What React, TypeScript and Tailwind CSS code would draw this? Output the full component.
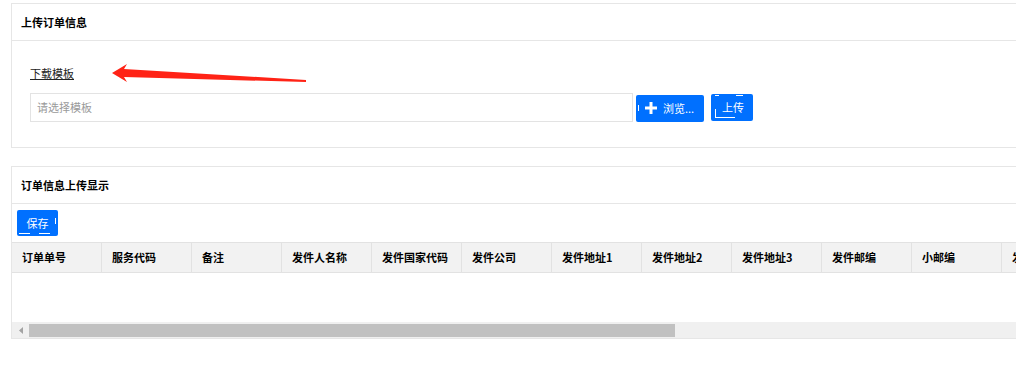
import React from 'react';

const columns = [
  '订单单号',
  '服务代码',
  '备注',
  '发件人名称',
  '发件国家代码',
  '发件公司',
  '发件地址1',
  '发件地址2',
  '发件地址3',
  '发件邮编',
  '小邮编',
  '发件城市',
  '发件省份',
];

const font = "font-['Microsoft_YaHei','Noto_Sans_CJK_SC',sans-serif]";

const App: React.FC = () => {
  return (
    <div className={`w-[1016px] h-[374px] overflow-hidden bg-white text-[11px] text-[#333] ${font}`}>
      {/* Upload panel */}
      <div className="relative mt-[3px] ml-[11px] w-[1030px] border border-[#e6e6e6] bg-white">
        <div className="h-[37px] flex items-center px-[9px] border-b border-[#e6e6e6] text-black font-semibold">
          上传订单信息
        </div>
        <div className="pt-[24px] pb-[25px] pl-[18px]">
          <a className="block h-[16px] leading-[16px] w-fit underline text-[#222]" href="#">
            下载模板
          </a>
          <div className="mt-[12px] flex items-center">
            <div className="w-[603px] h-[29px] border border-[#e3e3e3] flex items-center pl-[6px] text-[#9a9a9a]">
              请选择模板
            </div>
            <button className="relative ml-[3px] mt-[1px] w-[68px] h-[27px] rounded-[2px] bg-[#0070ff] text-white flex items-center pl-[9px] gap-[6px]">
              <span className="absolute left-[2px] top-[10px] w-px h-[6px] bg-white" />
              <svg width="12" height="12" viewBox="0 0 12 12">
                <path d="M4.5 0h3v4.5H12v3H7.5V12h-3V7.5H0v-3h4.5z" fill="white" />
              </svg>
              <span>浏览...</span>
            </button>
            <button className="relative ml-[7px] w-[42px] h-[27px] rounded-[2px] bg-[#0070ff] text-white flex items-center justify-center pl-[2px]">
              <span className="absolute left-[4px] top-[1px] w-[4px] h-px bg-white" />
              <span className="absolute left-[25px] top-[1px] w-[7px] h-px bg-white" />
              <span className="absolute left-[4px] top-[15px] w-px h-[9px] bg-white" />
              <span className="absolute left-[4px] top-[23px] w-[20px] h-px bg-white" />
              上传
            </button>
          </div>
        </div>
        {/* red arrow annotation */}
        <svg className="absolute left-[-11px] top-[-3px] pointer-events-none" width="320" height="100" viewBox="0 0 320 100">
          <polygon
            points="111,72 126,63 123,68 305,79 305,81 123,76 126,81"
            fill="#ff2316"
          />
        </svg>
      </div>

      {/* Display panel */}
      <div className="mt-[18px] ml-[11px] w-[1030px] border border-[#e6e6e6] bg-white">
        <div className="h-[37px] flex items-center px-[9px] border-b border-[#e6e6e6] text-black font-semibold">
          订单信息上传显示
        </div>
        <div className="pt-[6px] pb-[6px] pl-[5px]">
          <button className="relative w-[41px] h-[26px] rounded-[2px] bg-[#0070ff] text-white flex items-center justify-center">
            <span className="absolute left-[38px] top-[8px] w-px h-[6px] bg-white" />
            <span className="absolute left-[2px] top-[23px] w-[11px] h-px bg-white" />
            <span className="absolute left-[22px] top-[23px] w-[11px] h-px bg-white" />
            保存
          </button>
        </div>
        <div className="overflow-hidden">
          <div className="flex w-max h-[31px] bg-[#f2f2f2] border-y border-[#e2e2e2]">
            {columns.map((c) => (
              <div
                key={c}
                className="w-[90px] shrink-0 flex items-center pl-[10px] border-r border-[#e2e2e2] font-semibold text-black whitespace-nowrap"
              >
                {c}
              </div>
            ))}
          </div>
          <div className="h-[49px]" />
          <div className="h-[16px] bg-[#f0f0f0] flex items-center">
            <div className="w-[17px] flex justify-center">
              <svg width="4" height="7" viewBox="0 0 4 7">
                <path d="M4 0v7L0 3.5z" fill="#a3a3a3" />
              </svg>
            </div>
            <div className="w-[646px] h-[13px] bg-[#c1c1c1]" />
          </div>
        </div>
      </div>
    </div>
  );
};

export default App;
